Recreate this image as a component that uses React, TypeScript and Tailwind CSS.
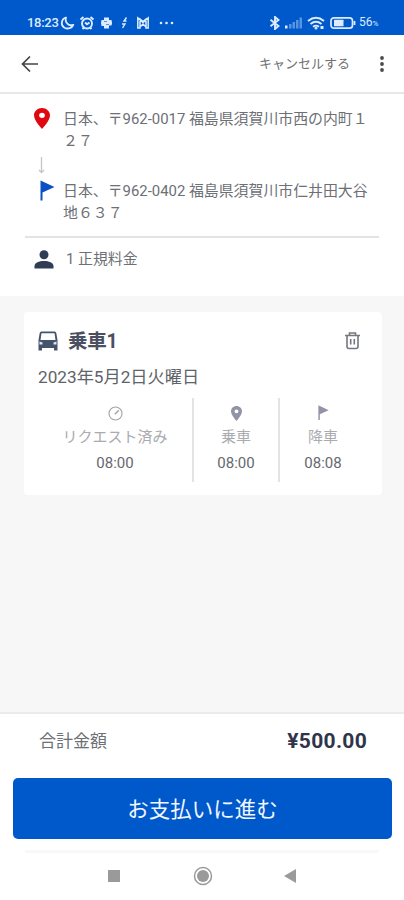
import React from "react";

const PIN = "M12 2C8.13 2 5 5.13 5 9c0 5.25 7 13 7 13s7-7.75 7-13c0-3.87-3.13-7-7-7zm0 9.5a2.5 2.5 0 1 1 0-5 2.5 2.5 0 0 1 0 5z";

function StatusBar() {
  return (
    <div className="flex h-[35px] items-center bg-[#0059cb] pl-[27px] pt-[11px] text-[#dcecff]">
      <span className="w-[33px] text-[13px] font-medium leading-4 tracking-[-0.3px]">18:23</span>
      <svg width="15" height="14" viewBox="0 0 15 14" fill="none" stroke="currentColor" strokeWidth="1.8">
        <path d="M6 1.5C1 3 .5 9.500 4.500 11.700C8 13.500 12 12 13.300 8.800C8.500 10.500 4.500 6.500 6 1.500Z" strokeLinejoin="round" />
      </svg>
      <svg className="ml-1" width="16" height="14" viewBox="0 0 16 14" fill="none" stroke="currentColor" strokeWidth="1.900">
        <circle cx="8" cy="7.500" r="5" />
        <path d="M1.500 3.500L4.500 1M14.500 3.500L11.500 1M3.500 13L5 11.500M12.500 13L11 11.500M6 6.500L8 8.300L10.500 6.500" />
      </svg>
      <svg className="ml-[5px]" width="13" height="14" viewBox="0 0 13 14" fill="currentColor">
        <path d="M4 1.500H9V4H11.500Q12.500 6.500 11.500 9.500H9V12.500H4V10H1.500Q.5 7 1.500 4H4Z" />
        <path d="M4 5.500H7M6 8.500H9" stroke="#0059cb" strokeWidth=".6" />
      </svg>
      <svg className="ml-[6px]" width="10" height="14" viewBox="0 0 10 14" fill="none" stroke="currentColor" strokeWidth="1.400">
        <path d="M7.500 1.500L5 5H7.500M3 8H6L3.500 12" />
      </svg>
      <svg className="ml-[7px]" width="14" height="14" viewBox="0 0 14 14" fill="none" stroke="currentColor" strokeWidth="1.500">
        <path d="M1.800 2V12H4V3L7 5.500L10 3V12H12.200V2L7 6.500ZM4 11L7 8L10 11" />
      </svg>
      <svg className="ml-[9px]" width="15" height="14" viewBox="0 0 15 14" fill="currentColor">
        <circle cx="2" cy="7" r="1.300" /><circle cx="7.500" cy="7" r="1.300" /><circle cx="13" cy="7" r="1.300" />
      </svg>
      <svg className="ml-[95px]" width="12" height="14" viewBox="0 0 12 14" fill="none" stroke="currentColor" strokeWidth="1.900">
        <path d="M1.500 3.800L9.500 10L6 13V1L9.500 4L1.500 10.200" />
      </svg>
      <svg className="ml-[3px]" width="19" height="14" viewBox="0 0 19 14" fill="currentColor">
        <rect x="1" y="9.500" width="2.500" height="3" />
        <g opacity=".4"><rect x="5" y="8" width="2.500" height="4.500" /><rect x="8.500" y="6" width="2.500" height="6.500" /><rect x="12" y="4" width="2.500" height="8.500" /><rect x="15.500" y="1.500" width="2.500" height="11" /></g>
      </svg>
      <svg className="ml-1" width="18" height="14" viewBox="0 0 18 14" fill="none" stroke="currentColor" strokeWidth="1.900">
        <path d="M1 5Q9-1.500 17 5M3.500 8Q9 3.500 14.500 8M6 10.700Q9 8.500 12 10.700" /><circle cx="9" cy="12" r=".6" /><path d="M13.500 11.500H16.500" strokeWidth="3" />
      </svg>
      <svg className="ml-[5px]" width="26" height="14" viewBox="0 0 26 14" fill="none">
        <rect x="1" y="1.800" width="21.500" height="10.400" rx="3" stroke="currentColor" strokeWidth="1.700" />
        <rect x="4" y="3.800" width="9.500" height="6.500" rx=".5" fill="currentColor" /><path d="M24.500 5V9" stroke="currentColor" strokeWidth="1.800" />
      </svg>
      <span className="ml-[3px] text-[12px] leading-4">56<span className="text-[8px] tracking-[-1px]">%</span></span>
    </div>
  );
}

function Flag({ className, size }: { className: string; size: number }) {
  return (
    <svg className={className} width={size} height={size * 1.4} viewBox="0 0 15 21" fill="currentColor">
      <path d="M0.500 0.500L14.500 7L2.500 12.500V20.500H0.500Z" />
    </svg>
  );
}

function Header() {
  return (
    <header className="flex h-[59px] items-center border-b-2 border-[#e7e7e7] bg-white pl-[21px] text-[#444]">
      <svg width="18" height="18" viewBox="0 0 18 18" fill="none" stroke="currentColor" strokeWidth="1.700">
        <path d="M17 9H2M9 1.500L1.500 9L9 16.500" />
      </svg>
      <span className="ml-[220px] w-[110px] whitespace-nowrap text-[13px] leading-5 text-[#707070]">キャンセルする</span>
      <svg className="ml-[10px]" width="6" height="18" viewBox="0 0 6 18" fill="#4b4b4b">
        <circle cx="3" cy="3" r="1.900" /><circle cx="3" cy="9" r="1.900" /><circle cx="3" cy="15" r="1.900" />
      </svg>
    </header>
  );
}

function Route() {
  return (
    <section className="h-[202px] bg-white px-[25px] pt-[14px] text-[14.900px] leading-[22px] text-[#6d7075]">
      <div className="flex h-[72px]">
        <div className="flex w-[38px] flex-col pl-[9px]">
          <svg width="16" height="21" viewBox="5 2 14 20" preserveAspectRatio="none" fill="#e10710"><path d={PIN} /></svg>
          <svg className="ml-[3px] mt-[28px]" width="9" height="17" viewBox="0 0 9 17" fill="none" stroke="#c5c5c5" strokeWidth="1.300"><path d="M4.500 0V15M2 13L4.500 15.500L7 13" /></svg>
        </div>
        <p className="whitespace-nowrap">日本、〒962-0017 福島県須賀川市西の内町１<br />２７</p>
      </div>
      <div className="flex h-[56px]">
        <div className="w-[38px] pl-[15px]"><Flag className="text-[#0a50c4]" size={15} /></div>
        <p className="whitespace-nowrap">日本、〒962-0402 福島県須賀川市仁井田大谷<br />地６３７</p>
      </div>
      <div className="flex h-[46px] items-center border-t-2 border-[#e2e4e4] pb-[2px] pl-[9px]">
        <svg width="20" height="19" viewBox="0 0 20 19" fill="#303d54"><circle cx="10" cy="4.700" r="4.500" /><path d="M0.500 18.500V16C0.500 9.200 19.500 9.200 19.500 16V18.500Z" /></svg>
        <span className="ml-[12px] whitespace-nowrap">1 正規料金</span>
      </div>
    </section>
  );
}

function Stop({ icon, label, time, className }: { icon: React.ReactNode; label: string; time: string; className: string }) {
  return (
    <div className={"flex h-[84px] flex-col items-center pt-[7px] " + className}>
      <div className="flex h-4 items-center">{icon}</div>
      <span className="mt-[5px] whitespace-nowrap text-[15px] leading-[22px] text-[#aaabb0]">{label}</span>
      <span className="mt-[4px] text-[15px] leading-[22px] text-[#66696e]">{time}</span>
    </div>
  );
}

function RideCard() {
  return (
    <div className="ml-[24px] h-[183px] w-[358px] rounded-[4px] bg-white pt-[14px]">
      <div className="flex h-[30px] items-center pl-[14px] pr-[21px]">
        <svg width="20" height="20" viewBox="0 0 20 20">
          <path d="M3.500 .5H16.500Q18 .5 18.300 2L19.500 9V19.500H16V17H4V19.500H0.500V9L1.700 2Q2 .5 3.500 .5Z" fill="#46546b" />
          <path d="M3.500 2.200H16.500L17.500 9H2.500Z" fill="#fff" />
          <path d="M1.500 10.500L4.500 11.500V13.500H1.500ZM18.500 10.500L15.500 11.500V13.500H18.500Z" fill="#dce7ef" />
        </svg>
        <h2 className="ml-[10px] flex-1 pt-[2px] text-[19.500px] font-bold leading-[28px] tracking-[-0.2px] text-[#4a4f61]">乗車1</h2>
        <svg width="17" height="18" viewBox="0 0 17 18" fill="none" stroke="#74777e" strokeWidth="1.600">
          <path d="M1 3.500H16M5.500 3V1H11.500V3M3 4V14.500Q3 16.500 5 16.500H12Q14 16.500 14 14.500V4M6.700 7V12.500M10.300 7V12.500" />
        </svg>
      </div>
      <p className="mt-[8px] pl-[14px] text-[17.200px] leading-[26px] text-[#606368]">2023年5月2日火曜日</p>
      <div className="mt-[8px] flex">
        <Stop className="w-[170px] border-r-2 border-[#e3e3e5] pl-[14px]" label="リクエスト済み" time="08:00" icon={
          <svg width="15" height="15" viewBox="0 0 15 15" fill="none" stroke="#a2a3a8" strokeWidth="1.100"><circle cx="7.500" cy="7.500" r="6.500" /><path d="M6.800 8.200L10.800 4.200" strokeWidth="1.400" /></svg>} />
        <Stop className="w-[86px] border-r-2 border-[#e3e3e5]" label="乗車" time="08:00" icon={
          <svg width="11" height="15" viewBox="5 2 14 20" preserveAspectRatio="none" fill="#9294a5"><path d={PIN} /></svg>} />
        <Stop className="w-[86px]" label="降車" time="08:08" icon={<Flag className="text-[#9294a5]" size={11} />} />
      </div>
    </div>
  );
}

export default function App() {
  return (
    <div className="flex h-[900px] w-[404px] flex-col overflow-hidden bg-white font-['Roboto','Noto_Sans_CJK_JP',sans-serif]">
      <StatusBar />
      <Header />
      <Route />
      <main className="flex-1 bg-[#f7f7f7] pt-[16px]"><RideCard /></main>
      <footer className="h-[188px] border-t-2 border-[#ebebeb] bg-white">
        <div className="flex h-[64px] items-center justify-between pb-[11px] pl-[39px] pr-[37px]">
          <span className="text-[17px] leading-[26px] text-[#6c6f73]">合計金額</span>
          <span className="text-[21px] font-bold leading-[26px] tracking-[0.3px] text-[#30344a]">¥500.00</span>
        </div>
        <button className="ml-[13px] flex h-[61px] w-[379px] items-center justify-center rounded-[5px] bg-[#0059cb] pt-[2px] text-[21.500px] leading-8 text-[#f2f7ff]">お支払いに進む</button>
        <div className="mx-[25px] mt-[11px] h-[3px] bg-[#f8f8f8]" />
        <nav className="flex h-[46px] items-center justify-center pr-[1px]">
          <svg width="190" height="20" viewBox="0 0 190 20" fill="#9a9a9a">
            <rect x="1" y="4" width="12" height="12" />
            <circle cx="96" cy="10" r="8.500" fill="none" stroke="#9a9a9a" strokeWidth="1.500" /><circle cx="96" cy="10" r="6" />
            <path d="M177 10L189 3V17Z" />
          </svg>
        </nav>
      </footer>
    </div>
  );
}
